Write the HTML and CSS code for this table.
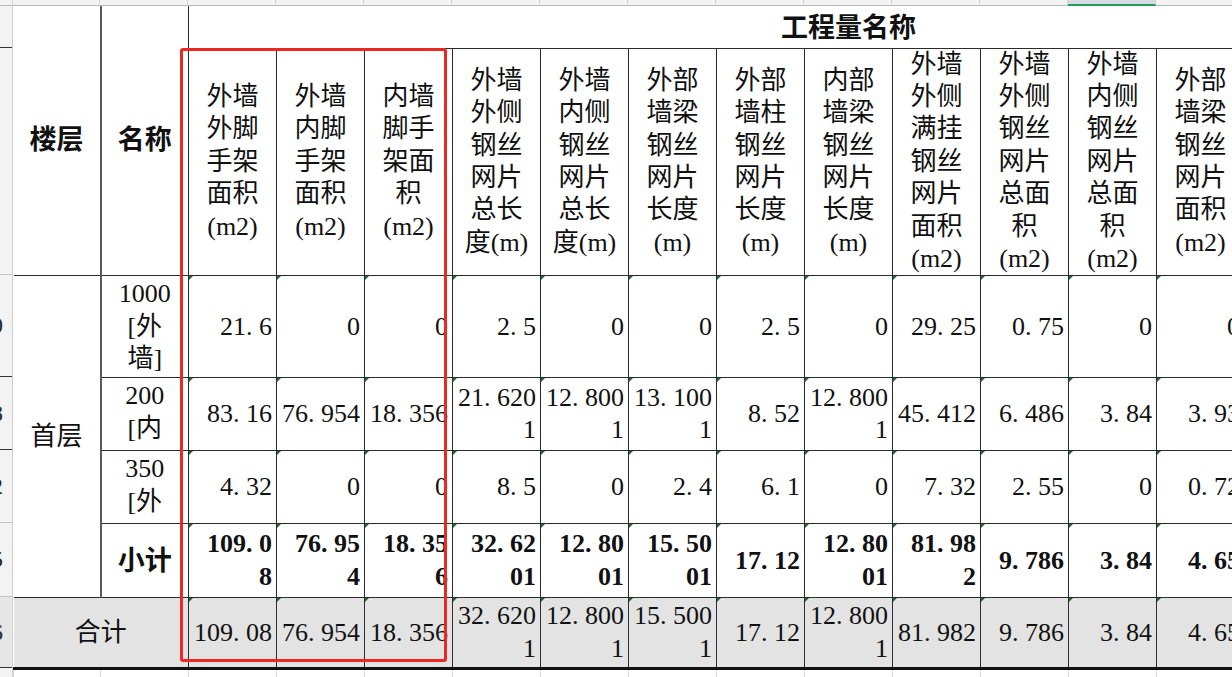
FILE: index.html
```html
<!DOCTYPE html>
<html lang="zh-CN">
<head>
<meta charset="utf-8">
<title>工程量名称</title>
<link rel="stylesheet" href="styles.css">
</head>
<body>
<div class="sheet">
  <div class="colhdr">
    <div class="ch corner"></div>
    <div class="ch w87"></div>
    <div class="ch"></div>
    <div class="ch"></div><div class="ch"></div><div class="ch"></div><div class="ch"></div>
    <div class="ch"></div><div class="ch"></div><div class="ch"></div><div class="ch"></div>
    <div class="ch"></div><div class="ch"></div><div class="ch sel"></div><div class="ch"></div>
    <div class="ch"></div><div class="ch"></div><div class="ch"></div>
  </div>
  <div class="main">
    <div class="rowhdr">
      <div class="rh h-title dark"></div>
      <div class="rh h-head"></div>
      <div class="rh h-r1 dark">10</div>
      <div class="rh h-r2 dark">18</div>
      <div class="rh h-r3">12</div>
      <div class="rh h-sub">15</div>
      <div class="rh h-tot dark">16</div>
      <div class="rh h-fill"></div>
    </div>
    <table class="tbl">
      <colgroup>
        <col class="c-floor">
        <col class="c-name">
        <col class="c-q" span="15">
      </colgroup>
      <tr class="r-title">
        <th class="hb top floorcol hdr-side" rowspan="2">楼层</th>
        <th class="hb top hdr-side" rowspan="2">名称</th>
        <th class="hb top title" colspan="15">工程量名称</th>
      </tr>
      <tr class="r-head">
        <th class="qh">外墙<br>外脚<br>手架<br>面积<br>(m2)</th>
        <th class="qh">外墙<br>内脚<br>手架<br>面积<br>(m2)</th>
        <th class="qh">内墙<br>脚手<br>架面<br>积<br>(m2)</th>
        <th class="qh">外墙<br>外侧<br>钢丝<br>网片<br>总长<br>度(m)</th>
        <th class="qh">外墙<br>内侧<br>钢丝<br>网片<br>总长<br>度(m)</th>
        <th class="qh">外部<br>墙梁<br>钢丝<br>网片<br>长度<br>(m)</th>
        <th class="qh">外部<br>墙柱<br>钢丝<br>网片<br>长度<br>(m)</th>
        <th class="qh">内部<br>墙梁<br>钢丝<br>网片<br>长度<br>(m)</th>
        <th class="qh">外墙<br>外侧<br>满挂<br>钢丝<br>网片<br>面积<br>(m2)</th>
        <th class="qh">外墙<br>外侧<br>钢丝<br>网片<br>总面<br>积<br>(m2)</th>
        <th class="qh">外墙<br>内侧<br>钢丝<br>网片<br>总面<br>积<br>(m2)</th>
        <th class="qh">外部<br>墙梁<br>钢丝<br>网片<br>面积<br>(m2)</th>
        <th class="qh"></th>
        <th class="qh"></th>
        <th class="qh"></th>
      </tr>
      <tr class="r-1">
        <td class="floor floorcol" rowspan="4">首层</td>
        <td class="name"><div class="clip c1">1000<br>[外<br>墙]</div></td>
        <td class="n">21<span class="p">.</span>6</td>
        <td class="n">0</td>
        <td class="n">0</td>
        <td class="n">2<span class="p">.</span>5</td>
        <td class="n">0</td>
        <td class="n">0</td>
        <td class="n">2<span class="p">.</span>5</td>
        <td class="n">0</td>
        <td class="n">29<span class="p">.</span>25</td>
        <td class="n">0<span class="p">.</span>75</td>
        <td class="n">0</td>
        <td class="n">0</td>
        <td class="n"></td><td class="n"></td><td class="n"></td>
      </tr>
      <tr class="r-2">
        <td class="name"><div class="clip">200<br>[内<br>墙]</div></td>
        <td class="n">83<span class="p">.</span>16</td>
        <td class="n">76<span class="p">.</span>954</td>
        <td class="n">18<span class="p">.</span>356</td>
        <td class="n">21<span class="p">.</span>620<br>1</td>
        <td class="n">12<span class="p">.</span>800<br>1</td>
        <td class="n">13<span class="p">.</span>100<br>1</td>
        <td class="n">8<span class="p">.</span>52</td>
        <td class="n">12<span class="p">.</span>800<br>1</td>
        <td class="n">45<span class="p">.</span>412</td>
        <td class="n">6<span class="p">.</span>486</td>
        <td class="n">3<span class="p">.</span>84</td>
        <td class="n">3<span class="p">.</span>93</td>
        <td class="n"></td><td class="n"></td><td class="n"></td>
      </tr>
      <tr class="r-3">
        <td class="name"><div class="clip">350<br>[外<br>墙]</div></td>
        <td class="n">4<span class="p">.</span>32</td>
        <td class="n">0</td>
        <td class="n">0</td>
        <td class="n">8<span class="p">.</span>5</td>
        <td class="n">0</td>
        <td class="n">2<span class="p">.</span>4</td>
        <td class="n">6<span class="p">.</span>1</td>
        <td class="n">0</td>
        <td class="n">7<span class="p">.</span>32</td>
        <td class="n">2<span class="p">.</span>55</td>
        <td class="n">0</td>
        <td class="n">0<span class="p">.</span>72</td>
        <td class="n"></td><td class="n"></td><td class="n"></td>
      </tr>
      <tr class="r-sub">
        <td class="name hb">小计</td>
        <td class="n b">109<span class="p">.</span>0<br>8</td>
        <td class="n b">76<span class="p">.</span>95<br>4</td>
        <td class="n b">18<span class="p">.</span>35<br>6</td>
        <td class="n b">32<span class="p">.</span>62<br>01</td>
        <td class="n b">12<span class="p">.</span>80<br>01</td>
        <td class="n b">15<span class="p">.</span>50<br>01</td>
        <td class="n b">17<span class="p">.</span>12</td>
        <td class="n b">12<span class="p">.</span>80<br>01</td>
        <td class="n b">81<span class="p">.</span>98<br>2</td>
        <td class="n b">9<span class="p">.</span>786</td>
        <td class="n b">3<span class="p">.</span>84</td>
        <td class="n b">4<span class="p">.</span>65</td>
        <td class="n b"></td><td class="n b"></td><td class="n b"></td>
      </tr>
      <tr class="r-tot">
        <td class="sum" colspan="2">合计</td>
        <td class="n">109<span class="p">.</span>08</td>
        <td class="n">76<span class="p">.</span>954</td>
        <td class="n">18<span class="p">.</span>356</td>
        <td class="n">32<span class="p">.</span>620<br>1</td>
        <td class="n">12<span class="p">.</span>800<br>1</td>
        <td class="n">15<span class="p">.</span>500<br>1</td>
        <td class="n">17<span class="p">.</span>12</td>
        <td class="n">12<span class="p">.</span>800<br>1</td>
        <td class="n">81<span class="p">.</span>982</td>
        <td class="n">9<span class="p">.</span>786</td>
        <td class="n">3<span class="p">.</span>84</td>
        <td class="n">4<span class="p">.</span>65</td>
        <td class="n"></td><td class="n"></td><td class="n"></td>
      </tr>
      <tr class="r-fill">
        <td class="f"></td><td class="f"></td>
        <td class="f"></td><td class="f"></td><td class="f"></td><td class="f"></td><td class="f"></td>
        <td class="f"></td><td class="f"></td><td class="f"></td><td class="f"></td><td class="f"></td>
        <td class="f"></td><td class="f"></td><td class="f"></td><td class="f"></td><td class="f"></td>
      </tr>
    </table>
  </div>
  <div class="mark"></div>
</div>
</body>
</html>
```

FILE: styles.css
```css
html, body {
  margin: 0;
  padding: 0;
  background: #ffffff;
  overflow: hidden;
}

.sheet {
  position: relative;
  width: 1508px;
  font-family: "Liberation Serif", "Noto Sans CJK SC", serif;
  font-size: 26px;
  color: #111;
}

/* spreadsheet column header strip */
.colhdr {
  display: flex;
  height: 6px;
  background: #f3f3f3;
}
.ch {
  box-sizing: border-box;
  flex: 0 0 88px;
  height: 6px;
  border-right: 1px solid #d2d2d2;
  border-bottom: 1px solid #b9b9b9;
}
.ch.corner { flex-basis: 13px; }
.ch.w87 { flex-basis: 87px; }
.ch.sel {
  background: #d9dae6;
  border-bottom: 2px solid #1f9d5c;
}

.main {
  display: flex;
  align-items: flex-start;
}

/* spreadsheet row header strip */
.rowhdr {
  flex: 0 0 13px;
  width: 13px;
  background: #f3f3f3;
  border-right: 1px solid #d0d0d0;
  box-sizing: border-box;
}
.rh {
  box-sizing: border-box;
  overflow: hidden;
  white-space: nowrap;
  text-align: right;
  padding-right: 9px;
  border-bottom: 1px solid #c4c4c4;
  color: #2a2a2a;
  font-size: 24px;
  display: flex;
  align-items: center;
  justify-content: flex-end;
}
.rh.dark { border-bottom-color: #333; }
.h-title { height: 42px; }
.h-head { height: 227px; }
.h-r1 { height: 102px; }
.h-r2 { height: 73px; }
.h-r3 { height: 73px; }
.h-sub { height: 74px; }
.h-tot { height: 71px; background: #e6e6e6; }
.h-fill { height: 12px; border-bottom: none; }

/* the table */
.tbl {
  table-layout: fixed;
  border-collapse: collapse;
  width: 1495px;
  flex: 0 0 1495px;
}
.c-floor { width: 87px; }
.c-name { width: 88px; }
.c-q { width: 88px; }

.tbl th, .tbl td {
  border: 1px solid #2b2b2b;
  padding: 0;
  line-height: 32.4px;
  overflow: hidden;
}
.tbl tr > :first-child { border-left: none; }

.r-title { height: 42px; }
.r-head { height: 227px; }
.r-1 { height: 102px; }
.r-2 { height: 73px; }
.r-3 { height: 73px; }
.r-sub { height: 74px; }
.r-tot { height: 71px; }
.r-fill { height: 10px; }

.tbl th.top { border-top: none; }
.hb {
  font-weight: 700;
  font-size: 27px;
  text-align: center;
  vertical-align: middle;
}
.hdr-side { padding-top: 6px; }
.floorcol { border-right: 2px solid #5a5a5a !important; }
.tbl th.title {
  vertical-align: top;
  line-height: 36px;
  padding-top: 4px;
}

.qh {
  font-weight: 400;
  text-align: center;
  vertical-align: middle;
}

.floor {
  text-align: center;
  vertical-align: middle;
}

.name {
  text-align: center;
  vertical-align: top;
}
.name.hb { vertical-align: middle; }
.clip {
  box-sizing: border-box;
  height: 68px;
  padding-top: 2px;
  overflow: hidden;
}
.clip.c1 {
  height: 101px;
  padding-top: 2px;
}

.n {
  position: relative;
  text-align: right;
  vertical-align: middle;
  padding: 0 4px 0 2px !important;
  white-space: nowrap;
}
.n::before {
  content: "";
  position: absolute;
  left: 0;
  top: 0;
  border-top: 4px solid #1e6b2c;
  border-right: 4px solid transparent;
}
.n.b { font-weight: 700; }
.p { letter-spacing: 0.25em; }

.r-tot td { background: #e3e3e3; }
.r-tot td { border-bottom: 3px solid #111; }
.sum {
  text-align: center;
  vertical-align: middle;
}

.tbl td.f {
  border: 1px solid #d6d6d6;
  border-top: 3px solid #111;
  background: #fff;
}

/* red highlight annotation */
.mark {
  position: absolute;
  left: 180px;
  top: 48px;
  width: 267px;
  height: 614px;
  box-sizing: border-box;
  border: 3px solid #ea2a22;
  border-radius: 3px;
  pointer-events: none;
}
```
